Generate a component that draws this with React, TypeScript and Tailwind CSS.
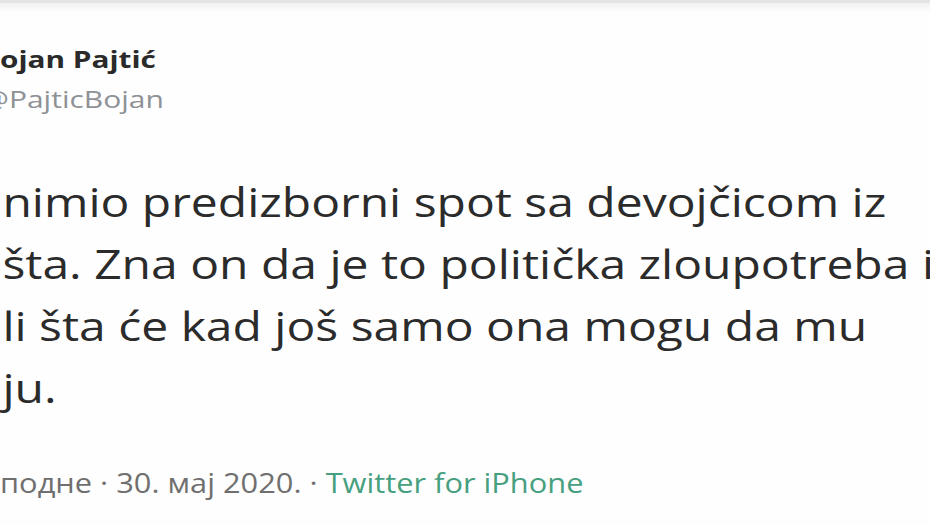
import React from "react";

const lines = [
  "nimio predizborni spot sa devojčicom iz",
  "šta. Zna on da je to politička zloupotreba i",
  "li šta će kad još samo ona mogu da mu",
  "ju.",
];

export default function App() {
  return (
    <div className="h-[525px] w-full overflow-hidden bg-[#fefefe] font-['Open_Sans',sans-serif]">
      {/* top edge of the cropped card */}
      <div className="h-[3px] bg-[#e4e4e4]" />
      <div className="h-[9px] bg-gradient-to-b from-[#f1f1f1] to-[#fefefe]" />

      <div>
        <div className="mt-[31px] origin-left scale-x-[1.24] text-[24px] leading-8 font-bold text-[#2a2a2a] whitespace-nowrap">
          ojan Pajtić
        </div>
        <div className="mt-2 -ml-[18px] origin-left scale-x-[1.25] text-[24px] leading-8 text-[#8e9296] whitespace-nowrap">
          @PajticBojan
        </div>

        <div className="mt-[56px] origin-left scale-x-[1.2] text-[40px] leading-[62px] text-[#2b2b2b]">
          {lines.map((l) => (
            <div key={l} className="whitespace-nowrap pl-[2px]">
              {l}
            </div>
          ))}
        </div>

        <div className="mt-[45px] origin-left scale-x-[1.1] text-[28px] leading-9 whitespace-nowrap text-[#6f6f6f]">
          <span>подне · 30. мај 2020. · </span>
          <span className="text-[#46a07f]">Twitter for iPhone</span>
        </div>
      </div>
    </div>
  );
}
